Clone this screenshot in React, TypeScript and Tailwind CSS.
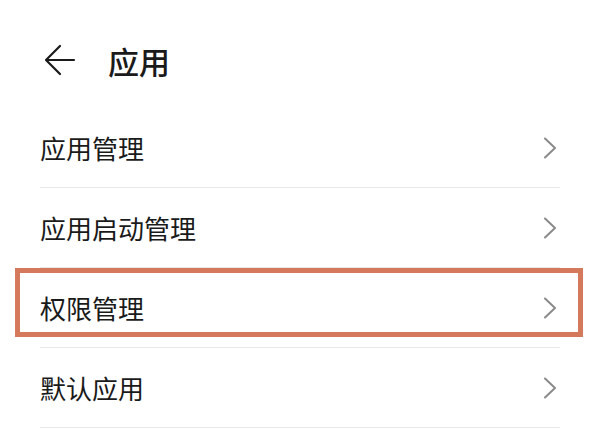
const items = ['应用管理', '应用启动管理', '权限管理', '默认应用'];

function Chevron() {
  return (
    <svg width="14" height="22" viewBox="0 0 14 22" fill="none" className="shrink-0">
      <polyline
        points="2,1.5 12,11 2,20.5"
        stroke="#8a8a8a"
        strokeWidth="2"
        strokeLinecap="round"
        strokeLinejoin="round"
      />
    </svg>
  );
}

export default function App() {
  return (
    <div
      className="w-[600px] h-[435px] bg-white overflow-hidden text-[#1a1a1a]"
      style={{ fontFamily: '"Noto Sans CJK SC", "Noto Sans", sans-serif' }}
    >
      {/* Header */}
      <div className="h-[108px] pt-[12px] pl-[44px] flex items-center">
        <svg width="32" height="32" viewBox="0 0 32 32" fill="none">
          <path
            d="M2 16H30M16 2L2 16L16 30"
            stroke="#1a1a1a"
            strokeWidth="2.2"
            strokeLinecap="round"
            strokeLinejoin="round"
          />
        </svg>
        <span className="ml-[32px] text-[31px] font-medium leading-none">应用</span>
      </div>

      {/* List */}
      <div className="flex flex-col">
        {items.map((label, i) => (
          <div
            key={label}
            className="relative mx-[40px] h-[80px] border-b border-[#e8e8e8] flex items-center justify-between"
          >
            <span className="text-[26px] leading-none">{label}</span>
            <div className="pr-[3px]">
              <Chevron />
            </div>
            {i === 2 && (
              <div className="absolute top-0 h-[69px] -left-[25px] -right-[23px] border-[5px] border-[#d4795b] pointer-events-none" />
            )}
          </div>
        ))}
      </div>
    </div>
  );
}
